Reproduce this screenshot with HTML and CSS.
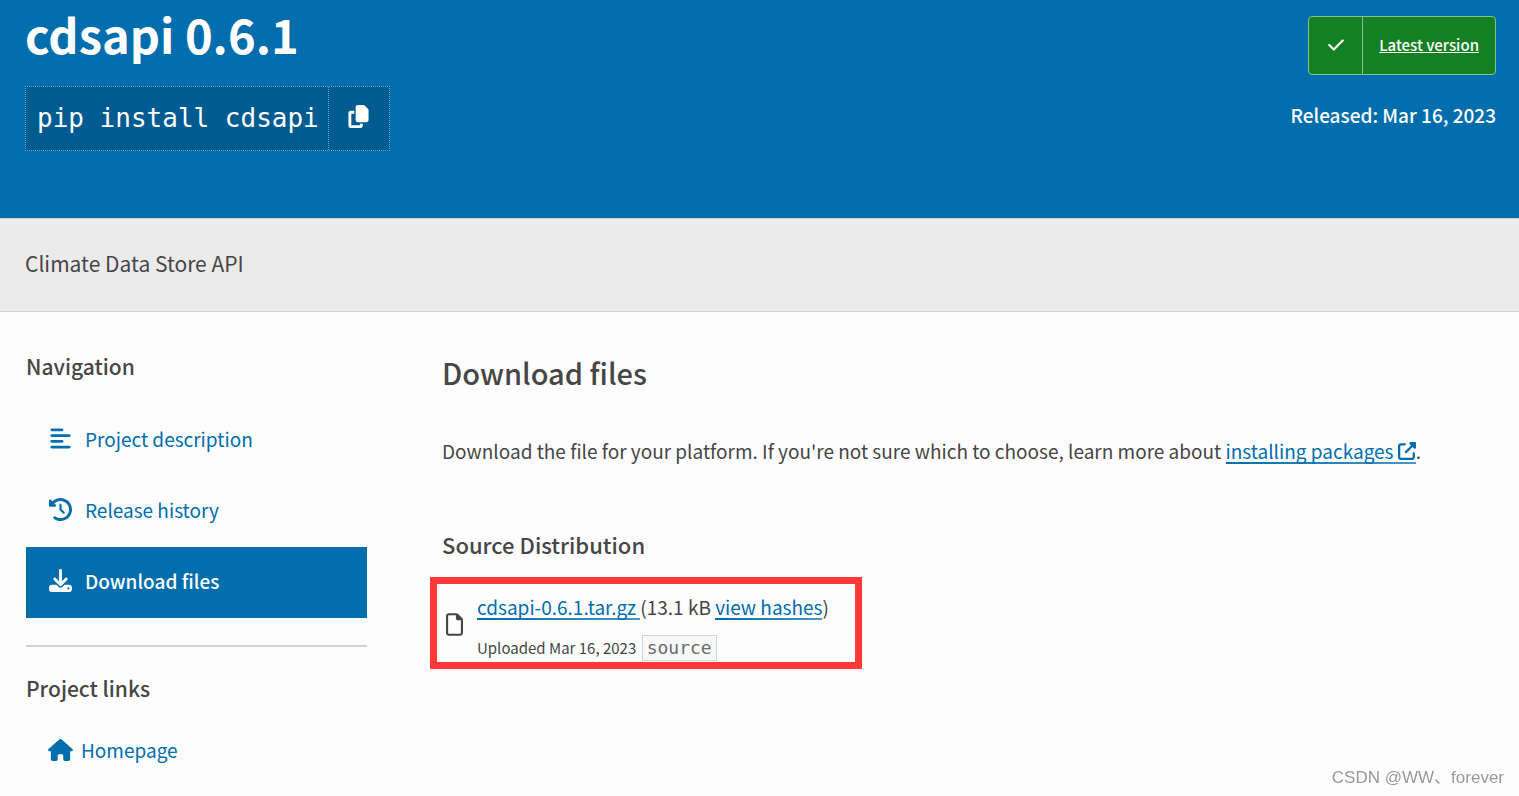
FILE: index.html
```html
<!DOCTYPE html>
<html lang="en">
<head>
    <meta charset="UTF-8">
    <meta name="viewport" content="width=device-width, initial-scale=1.0">
    <title>cdsapi 0.6.1</title>
    <link rel="stylesheet" href="styles.css">
</head>
<body>
    <!-- Package header -->
    <header class="package-header">
        <div class="package-header-left">
            <h1>cdsapi 0.6.1</h1>
            <div class="pip-command">
                <code>pip install cdsapi</code>
                <button type="button" class="copy-button" aria-label="Copy PIP instructions">
                    <svg class="icon-copy" viewBox="0 0 448 512"><path d="M208 0H332.1c12.7 0 24.9 5.1 33.9 14.1l67.9 67.9c9 9 14.1 21.2 14.1 33.9V336c0 26.5-21.5 48-48 48H208c-26.5 0-48-21.5-48-48V48c0-26.5 21.5-48 48-48zM48 128h80v64H64V448H256V416h64v48c0 26.5-21.5 48-48 48H48c-26.5 0-48-21.5-48-48V176c0-26.5 21.5-48 48-48z"/></svg>
                </button>
            </div>
        </div>
        <div class="package-header-right">
            <a href="#" class="status-badge">
                <span class="status-icon">
                    <svg class="icon-check" viewBox="0 0 448 512"><path d="M438.6 105.4c12.5 12.5 12.5 32.8 0 45.3l-256 256c-12.5 12.5-32.8 12.5-45.3 0l-128-128c-12.5-12.5-12.5-32.8 0-45.3s32.8-12.5 45.3 0L160 338.7 393.4 105.4c12.5-12.5 32.8-12.5 45.3 0z"/></svg>
                </span>
                <span class="status-text">Latest version</span>
            </a>
            <p class="package-date">Released: <time datetime="2023-03-16">Mar 16, 2023</time></p>
        </div>
    </header>

    <!-- Summary -->
    <div class="package-description">
        <p>Climate Data Store API</p>
    </div>

    <div class="page">
        <!-- Sidebar -->
        <aside class="sidebar">
            <h3>Navigation</h3>
            <nav class="tabs">
                <a href="#description" class="tab">
                    <svg class="icon" viewBox="0 0 512 512"><rect x="32" y="32" width="288" height="60" rx="30"/><rect x="32" y="160" width="448" height="60" rx="30"/><rect x="32" y="288" width="288" height="60" rx="30"/><rect x="32" y="416" width="448" height="60" rx="30"/></svg>
                    Project description
                </a>
                <a href="#history" class="tab">
                    <svg class="icon" viewBox="0 0 512 512"><path d="M75 75L41 41C25.9 25.9 0 36.6 0 57.9V168c0 13.3 10.7 24 24 24H134.1c21.4 0 32.1-25.9 17-41l-30.8-30.8C155 85.5 203 64 256 64c106 0 192 86 192 192s-86 192-192 192c-40.8 0-78.6-12.7-109.7-34.4c-14.5-10.1-34.4-6.6-44.6 7.9s-6.6 34.4 7.9 44.6C151.2 495 201.7 512 256 512c141.4 0 256-114.6 256-256S397.4 0 256 0C185.3 0 121.3 28.7 75 75zm181 53c-13.3 0-24 10.7-24 24V256c0 6.4 2.5 12.5 7 17l72 72c9.4 9.4 24.6 9.4 33.9 0s9.4-24.6 0-33.9l-65-65V152c0-13.3-10.7-24-24-24z"/></svg>
                    Release history
                </a>
                <a href="#files" class="tab active">
                    <svg class="icon" viewBox="0 0 512 512"><path d="M288 32c0-17.7-14.3-32-32-32s-32 14.3-32 32V274.7l-73.4-73.4c-12.5-12.5-32.8-12.5-45.3 0s-12.5 32.8 0 45.3l128 128c12.5 12.5 32.8 12.5 45.3 0l128-128c12.5-12.5 12.5-32.8 0-45.3s-32.8-12.5-45.3 0L288 274.7V32zM64 352c-35.3 0-64 28.7-64 64v32c0 35.3 28.7 64 64 64H448c35.3 0 64-28.7 64-64V416c0-35.3-28.7-64-64-64H346.5l-45.3 45.3c-25 25-65.5 25-90.5 0L165.5 352H64zm368 56a24 24 0 1 1 0 48 24 24 0 1 1 0-48z"/></svg>
                    Download files
                </a>
            </nav>
            <h3 class="links-title">Project links</h3>
            <a href="#" class="project-link">
                <svg class="icon-home" viewBox="0 0 576 512"><path d="M575.8 255.5c0 18-15 32.1-32 32.1h-32l.7 160.2c0 2.7-.2 5.4-.5 8.1V472c0 22.1-17.9 40-40 40H456c-1.1 0-2.2 0-3.3-.1c-1.4 .1-2.8 .1-4.2 .1H416 392c-22.1 0-40-17.9-40-40V448 384c0-17.7-14.3-32-32-32H256c-17.7 0-32 14.3-32 32v64 24c0 22.1-17.9 40-40 40H160 128.1c-1.5 0-3-.1-4.5-.2c-1.2 .1-2.4 .2-3.6 .2H104c-22.1 0-40-17.9-40-40V360c0-.9 0-1.9 .1-2.8V287.6H32c-18 0-32-14-32-32.1c0-9 3-17 10-24L266.4 8c7-7 15-8 22-8s15 2 21 7L564.8 231.5c8 7 12 15 11 24z"/></svg>
                Homepage
            </a>
        </aside>

        <!-- Files -->
        <main class="content" id="files">
            <h2>Download files</h2>
            <p class="intro">Download the file for your platform. If you're not sure which to choose, learn more about <a href="#" class="text-link">installing packages <svg class="icon-external" viewBox="0 0 512 512"><path d="M352 0c-12.9 0-24.6 7.8-29.6 19.8s-2.2 25.7 6.9 34.9L370.7 96 201.4 265.4c-12.5 12.5-12.5 32.8 0 45.3s32.8 12.5 45.3 0L416 141.3l41.4 41.4c9.2 9.2 22.9 11.9 34.9 6.9s19.8-16.6 19.8-29.6V32c0-17.7-14.3-32-32-32H352zM80 32C35.8 32 0 67.8 0 112V432c0 44.2 35.8 80 80 80H400c44.2 0 80-35.8 80-80V320c0-17.7-14.3-32-32-32s-32 14.3-32 32V432c0 8.8-7.2 16-16 16H80c-8.8 0-16-7.2-16-16V112c0-8.8 7.2-16 16-16H192c17.7 0 32-14.3 32-32s-14.3-32-32-32H80z"/></svg></a>.</p>
            <h3 class="files-title">Source Distribution</h3>
            <div class="file">
                <svg class="icon-file" viewBox="0 0 384 512"><path d="M320 464c8.8 0 16-7.2 16-16V160H256c-17.7 0-32-14.3-32-32V48H64c-8.8 0-16 7.2-16 16V448c0 8.8 7.2 16 16 16H320zM0 64C0 28.7 28.7 0 64 0H229.5c17 0 33.3 6.7 45.3 18.7l90.5 90.5c12 12 18.7 28.3 18.7 45.3V448c0 35.3-28.7 64-64 64H64c-35.3 0-64-28.7-64-64V64z"/></svg>
                <div class="file-info">
                    <p class="file-name"><a href="#" class="text-link">cdsapi-0.6.1.tar.gz </a>(13.1 kB <a href="#" class="text-link">view hashes</a>)</p>
                    <p class="file-meta">Uploaded <time datetime="2023-03-16">Mar 16, 2023</time> <code>source</code></p>
                </div>
            </div>
        </main>
    </div>

    <div class="watermark">CSDN @WW、forever</div>
</body>
</html>
```
FILE: styles.css
```css
* {
    box-sizing: border-box;
}
body {
    margin: 0;
    background: #fdfdfd;
    color: #464646;
    font-family: "Noto Sans CJK SC", sans-serif;
    font-size: 19px;
    line-height: 28px;
}
h1, h2, h3, p {
    margin: 0;
}
a {
    color: #006dad;
    text-decoration: none;
}
svg {
    fill: currentColor;
    flex: none;
}

/* Header */
.package-header {
    display: flex;
    justify-content: space-between;
    background: #006dad;
    color: #fff;
    padding: 2px 23px 67px 25px;
}
h1 {
    font-size: 47px;
    font-weight: 700;
    line-height: 64px;
}
.pip-command {
    display: flex;
    height: 65px;
    margin-top: 20px;
    background: #005b91;
    border: 1px dotted #6fa6cb;
}
.pip-command code {
    padding: 0 9px 0 11px;
    font-family: "DejaVu Sans Mono", monospace;
    font-size: 26px;
    line-height: 63px;
}
.copy-button {
    width: 61px;
    padding: 0 0 2px;
    border: none;
    border-left: 1px dotted #6fa6cb;
    background: none;
    color: #fff;
    cursor: pointer;
}
.icon-copy {
    width: 21px;
    height: 23px;
}
.package-header-right {
    display: flex;
    flex-direction: column;
    align-items: flex-end;
    padding-top: 14px;
    font-weight: 500;
}
.status-badge {
    display: flex;
    height: 59px;
    background: #148024;
    border: 1px solid #89c08f;
    border-radius: 4px;
    color: #fff;
    font-size: 15px;
    line-height: 55px;
}
.status-icon {
    display: flex;
    align-items: center;
    justify-content: center;
    width: 54px;
    padding-bottom: 2px;
    border-right: 1px solid #89c08f;
}
.icon-check {
    width: 16px;
    height: 18px;
}
.status-text {
    padding: 0 16px;
    text-decoration: underline;
}
.package-date {
    margin-top: 26px;
}

/* Summary */
.package-description {
    padding: 30px 25px 34px;
    background: #ebebeb;
    border-top: 1px solid #d3d3d3;
    border-bottom: 1px solid #d3d3d3;
    font-size: 21px;
}

/* Columns */
.page {
    display: grid;
    grid-template-columns: 341px 1fr;
    gap: 75px;
    padding: 40px 26px 24px;
}
h3 {
    font-size: 21px;
    font-weight: 500;
}
.tabs {
    margin-top: 25px;
    padding-bottom: 27px;
    border-bottom: 2px solid #d3d3d3;
}
.tab {
    display: flex;
    align-items: center;
    gap: 13px;
    height: 71px;
    padding: 0 23px 4px;
}
.tab.active {
    background: #006dad;
    color: #fff;
    font-weight: 500;
}
.icon {
    width: 23px;
    height: 23px;
}
.links-title {
    margin-top: 27px;
}
.project-link {
    display: flex;
    align-items: center;
    gap: 8px;
    margin-top: 34px;
    padding-left: 22px;
}
.icon-home {
    width: 25px;
    height: 22px;
}

/* Files */
h2 {
    font-size: 29px;
    font-weight: 500;
    line-height: 40px;
}
.intro {
    margin: 45px 0 65px;
}
.files-title {
    font-size: 22px;
}
.text-link {
    background: linear-gradient(to right, #006dad, #4a95c6) left bottom / 100% 2px no-repeat;
}
.icon-external {
    width: 18px;
    height: 18px;
    vertical-align: -1px;
}
.file {
    display: flex;
    align-items: center;
    gap: 14px;
    width: 432px;
    margin: 19px 0 0 -12px;
    padding: 9px 9px 0;
    border: 7px solid #ff3838;
}
.icon-file {
    width: 17px;
    height: 23px;
    margin-bottom: 6px;
}
.file-meta {
    margin-top: 13px;
    font-size: 15px;
}
.file-meta code {
    display: inline-block;
    margin-left: 2px;
    padding: 0 4px;
    background: #f8f8f8;
    border: 1px solid #d3d3d3;
    color: #6c6c6c;
    font-family: "DejaVu Sans Mono", monospace;
    font-size: 18px;
    line-height: 24px;
}

.watermark {
    position: fixed;
    right: 15px;
    bottom: 4px;
    color: #999;
    font-family: "Liberation Sans", "Noto Sans CJK SC", sans-serif;
    font-size: 17px;
}
```
